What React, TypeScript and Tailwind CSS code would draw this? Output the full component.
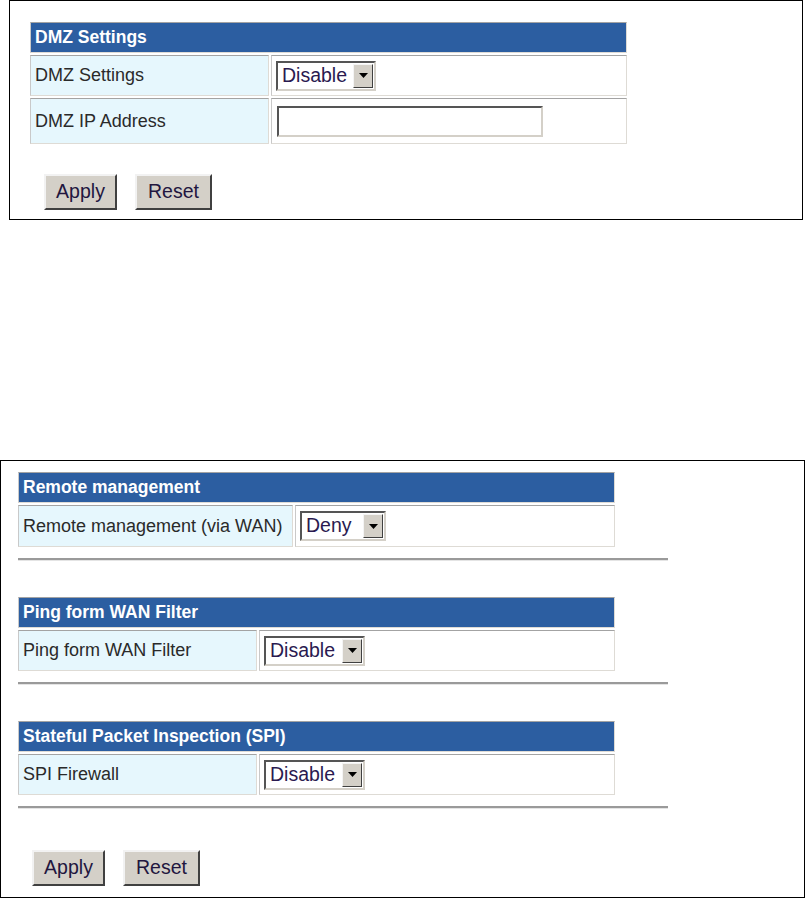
import React from 'react';

const font = { fontFamily: '"Liberation Sans", Arial, sans-serif' };

const cell = 'border border-t-[#a3a3a3] border-l-[#c9c9c9] border-b-[#dedbd5] border-r-[#dedbd5]';

function Header({ title }: { title: string }) {
  return (
    <div className={`h-[31px] flex items-center bg-[#2c5ea1] pl-[4px] text-[17.5px] font-bold text-white ${cell}`}>
      {title}
    </div>
  );
}

function Row({ label, labelWidth, height, children }: { label: string; labelWidth: number; height: number; children: React.ReactNode }) {
  return (
    <div className="flex gap-[2px]" style={{ height }}>
      <div className={`flex items-center bg-[#e6f7fd] pl-[4px] text-[18px] text-[#2a2a2a] ${cell}`} style={{ width: labelWidth }}>
        {label}
      </div>
      <div className={`flex flex-1 items-center bg-white pl-[4px] ${cell}`}>{children}</div>
    </div>
  );
}

function Select({ value, width }: { value: string; width: number }) {
  return (
    <div className="flex h-[30px] items-stretch border-2 border-t-[#555] border-l-[#555] border-b-[#d4d0c8] border-r-[#d4d0c8] bg-white" style={{ width }}>
      <span className="flex flex-1 items-center pl-[4px] text-[19.5px] text-[#2a1a50]">{value}</span>
      <span className="my-[1px] mr-[1px] flex w-[20px] items-center justify-center border border-t-[#f4f4f4] border-l-[#f4f4f4] border-b-[#404040] border-r-[#404040] bg-[#d4d0c8]">
        <svg width="9" height="5" viewBox="0 0 9 5"><path d="M0 0h9L4.5 5z" fill="#000" /></svg>
      </span>
    </div>
  );
}

function Btn({ label, width }: { label: string; width: number }) {
  return (
    <button className="h-[36px] border-2 border-t-[#f2f2f2] border-l-[#f2f2f2] border-b-[#404040] border-r-[#404040] bg-[#d4d0c8] text-[19.5px] text-[#22163f]" style={{ width }}>
      {label}
    </button>
  );
}

function Rule() {
  return <div className="mt-[11px] h-[3px] w-[650px] border-t-2 border-b border-t-[#9a9a9a] border-b-[#e4e4e4]" />;
}

export default function App() {
  return (
    <div className="bg-white" style={font}>
      <div className="ml-[9px] h-[220px] w-[794px] border border-black pl-[20px] pt-[21px]">
        <div className="flex w-[597px] flex-col gap-[2px]">
          <Header title="DMZ Settings" />
          <Row label="DMZ Settings" labelWidth={239} height={41}>
            <Select value="Disable" width={100} />
          </Row>
          <Row label="DMZ IP Address" labelWidth={239} height={46}>
            <div className="ml-[1px] h-[31px] w-[266px] border-2 border-t-[#555] border-l-[#555] border-b-[#d4d0c8] border-r-[#d4d0c8] bg-white" />
          </Row>
        </div>
        <div className="ml-[14px] mt-[30px] flex gap-[18px]">
          <Btn label="Apply" width={73} />
          <Btn label="Reset" width={77} />
        </div>
      </div>

      <div className="mt-[240px] h-[438px] w-[805px] border border-black pl-[17px] pt-[11px]">
        <div className="flex w-[597px] flex-col gap-[2px]">
          <Header title="Remote management" />
          <Row label="Remote management (via WAN)" labelWidth={275} height={42}>
            <Select value="Deny" width={86} />
          </Row>
        </div>
        <Rule />

        <div className="mt-[36px] flex w-[597px] flex-col gap-[2px]">
          <Header title="Ping form WAN Filter" />
          <Row label="Ping form WAN Filter" labelWidth={239} height={41}>
            <Select value="Disable" width={101} />
          </Row>
        </div>
        <Rule />

        <div className="mt-[36px] flex w-[597px] flex-col gap-[2px]">
          <Header title="Stateful Packet Inspection (SPI)" />
          <Row label="SPI Firewall" labelWidth={239} height={41}>
            <Select value="Disable" width={101} />
          </Row>
        </div>
        <Rule />

        <div className="ml-[14px] mt-[41px] flex gap-[18px]">
          <Btn label="Apply" width={73} />
          <Btn label="Reset" width={77} />
        </div>
      </div>
    </div>
  );
}
